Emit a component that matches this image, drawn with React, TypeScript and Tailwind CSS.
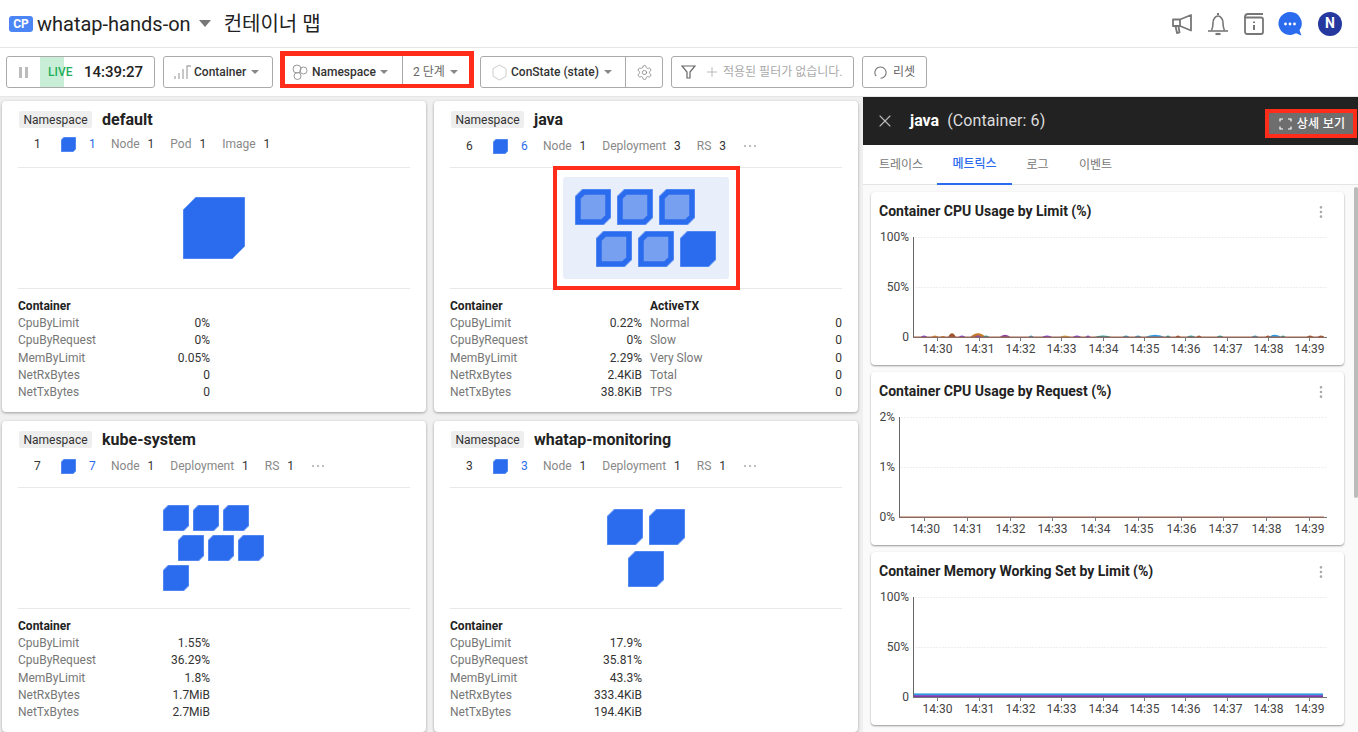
import React from "react";
import { EllipsisVertical, Plus, Settings, X } from "lucide-react";

const FONT = "font-['Roboto','Noto_Sans_CJK_KR',sans-serif]";

function Caret() {
  return <span className="inline-block w-0 h-0 border-x-[4px] border-x-transparent border-t-[4px] border-t-[#888]" />;
}

function Cube({ size, inner = false }: { size: number; inner?: boolean }) {
  return (
    <svg width={size} height={size} viewBox="0 0 100 100" className="block shrink-0">
      <polygon points="21,0 100,0 100,79 79,100 0,100 0,21" fill="#2b6cee" stroke="#78a2f4" strokeWidth={100 / size} />
      {inner && <polygon points="27,16 84,16 84,73 73,84 16,84 16,27" fill="#78a0f0" />}
    </svg>
  );
}

type Stat = { label: string; value: string };
type Row = [string, string];
type CardProps = {
  name: string;
  count: string;
  stats: Stat[];
  more?: boolean;
  map: React.ReactNode;
  rows: Row[];
  activeTx?: Row[];
};

function MetricColumn({ title, rows, width }: { title: string; rows: Row[]; width: string }) {
  return (
    <div className={width}>
      <div className="text-[12px] leading-[17px] font-bold text-[#222]">{title}</div>
      {rows.map(([k, v]) => (
        <div key={k} className="flex justify-between text-[12px] leading-[17.3px]">
          <span className="text-[#777]">{k}</span>
          <span className="text-[#333]">{v}</span>
        </div>
      ))}
    </div>
  );
}

function NsCard({ name, count, stats, more, map, rows, activeTx }: CardProps) {
  return (
    <div className="h-[311px] shrink-0 bg-white rounded-[4px] shadow-[0_1px_3px_rgba(0,0,0,0.35)] px-4 pt-[10px]">
      <div className="flex items-center h-[17px]">
        <span className="ml-[1px] h-[17px] w-[73px] flex items-center justify-center rounded-[2px] bg-[#eeeeee] text-[12px] text-[#333]">Namespace</span>
        <span className="ml-[10px] text-[16px] font-bold text-[#222] leading-[17px]">{name}</span>
      </div>
      <div className={`flex items-center h-[39px] text-[12px] pl-4 ${more ? "pb-[3px]" : "pb-[7px]"}`}>
        <span className="w-[27px] text-[#333]">{count}</span>
        <Cube size={15} />
        <span className="ml-[13px] w-[22px] text-[#2b6cee]">{count}</span>
        {stats.map((s) => (
          <span key={s.label} className="flex items-center mr-[16px]">
            <span className="text-[#888] mr-[8px]">{s.label}</span>
            <span className="text-[#333]">{s.value}</span>
          </span>
        ))}
        {more && (
          <span className="flex gap-[3px] ml-[2px]">
            <span className="w-[2px] h-[2px] rounded-full bg-[#aaa]" />
            <span className="w-[2px] h-[2px] rounded-full bg-[#aaa]" />
            <span className="w-[2px] h-[2px] rounded-full bg-[#aaa]" />
          </span>
        )}
      </div>
      <div className="h-[122px] border-y border-[#e8e8e8] flex items-center justify-center">{map}</div>
      <div className="flex gap-2 pt-[9px]">
        <MetricColumn title="Container" rows={rows} width="w-[192px]" />
        {activeTx && <MetricColumn title="ActiveTX" rows={activeTx} width="w-[192px]" />}
      </div>
    </div>
  );
}

function Honey({ rows, size, gap, offset, inner = [] as number[] }: { rows: number[]; size: number; gap: number; offset: number; inner?: number[] }) {
  let n = 0;
  return (
    <div className="flex flex-col mr-[1px]" style={{ gap }}>
      {rows.map((c, i) => (
        <div key={i} className="flex" style={{ gap, marginLeft: i % 2 ? offset : 0 }}>
          {Array.from({ length: c }).map(() => {
            const idx = n++;
            return <Cube key={idx} size={size} inner={inner.includes(idx)} />;
          })}
        </div>
      ))}
    </div>
  );
}

const ticksA = [937, 979, 1020, 1061, 1103, 1144, 1185, 1227, 1268, 1309];
const ticksB = [924.5, 967, 1010, 1052, 1095, 1138, 1181, 1223, 1266, 1309];
const tickLabels = ["14:30", "14:31", "14:32", "14:33", "14:34", "14:35", "14:36", "14:37", "14:38", "14:39"];

const blobs: [number, number, string, number][] = [
  [924, 4, "#7c3aed", 1.5], [935, 4, "#d98b1f", 1.5], [943, 3, "#d98b1f", 1], [952, 4, "#a0522d", 3], [962, 4, "#7c3aed", 1.5],
  [978, 8, "#c77a2a", 3], [978, 4, "#7c3aed", 1.5], [986, 4, "#16a0a8", 1.5], [1005, 6, "#8b3fa0", 2], [1031, 3, "#1f9bd1", 1.5],
  [1047, 6, "#7c3aed", 1.5], [1065, 6, "#d9a441", 1.5], [1077, 5, "#7c3aed", 1.5], [1088, 3, "#7c3aed", 1.5], [1103, 10, "#16a0a8", 1.5],
  [1126, 4, "#1f9bd1", 1.5], [1138, 4, "#1f9bd1", 1.5], [1155, 11, "#2b9be8", 2], [1168, 3, "#16a0a8", 1.5], [1178, 3, "#a0522d", 1.5],
  [1191, 5, "#16a0a8", 1.5], [1199, 3, "#a0522d", 1.5], [1220, 4, "#16a0a8", 1.5], [1255, 4, "#1f9bd1", 1.5], [1268, 3, "#a0522d", 1.5],
  [1275, 7, "#2b9be8", 2], [1283, 3, "#16a0a8", 1.5], [1310, 4, "#a0522d", 1.5], [1321, 4, "#a0522d", 1.5],
];

function ChartCard({ title, y, axis, ticks, band, spikes }: { title: string; y: string[]; axis: number; ticks: number[]; band?: boolean; spikes?: boolean }) {
  const gx = axis + 2;
  return (
    <div className="h-[173px] shrink-0 bg-white rounded-[4px] shadow-[0_1px_2px_rgba(0,0,0,0.4)]">
      <div className="h-[45px] pl-2 pr-4 flex items-start pt-[11px] justify-between">
        <span className="text-[14px] leading-[17px] font-bold text-[#222]">{title}</span>
        <EllipsisVertical size={16} className="text-[#aaa] mt-[1px] -mr-[1px]" />
      </div>
      <svg width="473" height="128" viewBox="871 237 473 128" className="block overflow-visible">
        <g fontFamily="Roboto, sans-serif" fontSize="12" fill="#444">
          <text x={axis - 4} y="241" textAnchor="end">{y[0]}</text>
          <text x={axis - 4} y="291" textAnchor="end">{y[1]}</text>
          <text x={axis - 4} y="341" textAnchor="end">{y[2]}</text>
          {tickLabels.map((t, i) => (
            <text key={t} x={ticks[i] + 0.5} y="352.5" textAnchor="middle">{t}</text>
          ))}
        </g>
        <line x1={gx} x2="1327" y1="237.5" y2="237.5" stroke="#eee" strokeDasharray="2 1" />
        <line x1={gx} x2="1327" y1="287.5" y2="287.5" stroke="#eee" strokeDasharray="2 1" />
        {spikes &&
          blobs.map(([x, w, c, h], i) => (
            <path key={i} d={`M${x - w} 337.5 Q${x} ${337.5 - h * 2.8} ${x + w} 337.5 Z`} fill={c} />
          ))}
        {band && (
          <>
            <rect x={axis} y="333.4" width={1323 - axis} height="2" fill="#2f9be0" />
            <rect x={axis} y="335.2" width={1323 - axis} height="2.3" fill="#7d36b0" />
          </>
        )}
        <line x1={axis + 0.5} x2={axis + 0.5} y1="237" y2="338" stroke="#666" />
        <line x1={axis} x2="1327" y1="337.5" y2="337.5" stroke="#777" />
        {!band && <line x1={axis} x2="1324" y1="337" y2="337" stroke="#a0604a" />}
        {ticks.map((t) => (
          <line key={t} x1={Math.floor(t) + 0.5} x2={Math.floor(t) + 0.5} y1="337" y2="341" stroke="#777" />
        ))}
      </svg>
    </div>
  );
}

const Btn = ({ children, className = "" }: { children: React.ReactNode; className?: string }) => (
  <div className={`h-[32px] rounded-[3px] border border-[#aaa] bg-white flex items-center shrink-0 ${className}`}>{children}</div>
);

const tabs = [
  { t: "트레이스", w: "w-[72px]", cls: "text-[#777]" },
  { t: "메트릭스", w: "w-[75px]", cls: "text-[#2b6cee] font-medium border-b-2 border-[#2b6cee]" },
  { t: "로그", w: "w-[51px]", cls: "text-[#777]" },
  { t: "이벤트", w: "w-[65px]", cls: "text-[#777]" },
];

export default function App() {
  return (
    <div className={`${FONT} w-[1358px] h-[732px] overflow-hidden bg-[#f0f0f0] flex flex-col`}>
      <header className="h-[48px] bg-white border-b border-[#e6e6e6] flex items-center shrink-0 pl-[9px] pr-[16px]">
        <span className="w-[24px] h-[16px] rounded-[3px] bg-[#4c86f6] text-white text-[12px] font-bold flex items-center justify-center">CP</span>
        <span className="ml-1 text-[20px] text-[#222]">whatap-hands-on</span>
        <span className="ml-2 inline-block w-0 h-0 border-x-[6px] border-x-transparent border-t-[7px] border-t-[#777]" />
        <span className="ml-[13px] text-[20px] text-[#222]">컨테이너 맵</span>
        <div className="ml-auto flex items-center">
          <svg width="20" height="20" viewBox="0 0 20 20" fill="none" stroke="#777" strokeWidth="1.8" strokeLinejoin="round">
            <path d="M1 5.5h7L19 1v15.5L8 12H1z" />
            <path d="M8 5.5V12" />
            <path d="M3.5 12l1.5 7 2.5-.6L6.5 12.5" />
          </svg>
          <svg width="22" height="24" viewBox="0 0 22 24" fill="none" stroke="#777" strokeWidth="1.6" className="ml-[15px]">
            <path d="M11 1v2" strokeWidth="2" />
            <path d="M4.5 18.5c1-2 1.5-3.5 1.5-7.5 0-4 2.4-7 5-7s5 3 5 7c0 4 .5 5.5 1.5 7.5" />
            <path d="M1 19h20" />
            <path d="M8.5 22h5" strokeWidth="2.2" />
          </svg>
          <svg width="20" height="22" viewBox="0 0 20 22" fill="none" stroke="#777" strokeWidth="1.8" className="ml-[15px]">
            <path d="M1 5V4a3 3 0 0 1 3-3h15" />
            <path d="M1 4.5h16a2 2 0 0 1 2 2V19a2 2 0 0 1-2 2H3a2 2 0 0 1-2-2z" />
            <path d="M10 12v5" strokeWidth="2" />
            <path d="M10 8.5v1.6" strokeWidth="2" />
          </svg>
          <svg width="24" height="24" viewBox="0 0 24 24" className="ml-[14px]">
            <path d="M12 0a11.5 11.5 0 1 0 6 21.3l5.5 2.2-2-5.2A11.5 11.5 0 0 0 12 0z" fill="#2b6cee" />
            <circle cx="7.5" cy="12" r="1.4" fill="#fff" />
            <circle cx="12" cy="12" r="1.4" fill="#fff" />
            <circle cx="16.5" cy="12" r="1.4" fill="#fff" />
          </svg>
          <span className="ml-[16px] w-6 h-6 rounded-full bg-[#26399e] text-white text-[14px] font-bold flex items-center justify-center">N</span>
        </div>
      </header>

      <div className="h-[49px] bg-white border-b border-[#e6e6e6] shrink-0 flex items-center pl-[6px] text-[12px]">
        <Btn className="w-[149px]">
          <span className="flex gap-[3px] ml-[12px]">
            <span className="w-[3px] h-[11px] bg-[#bbb]" />
            <span className="w-[3px] h-[11px] bg-[#bbb]" />
          </span>
          <span className="ml-[12px] w-[24px] h-full bg-[#c9eed8] pl-2 flex items-center text-[#1fae5b] font-medium whitespace-nowrap">LIVE</span>
          <span className="ml-[20px] text-[15px] font-medium text-[#222]">14:39:27</span>
        </Btn>
        <Btn className="w-[110px] ml-2 pl-[10px]">
          <svg width="17" height="14" viewBox="0 0 17 14" stroke="#aaa" strokeWidth="1.3" fill="none">
            <path d="M1 14v-3M5 14V8M9 14V4M13 14V1h4" />
          </svg>
          <span className="ml-[3px] font-medium text-[#333]">Container</span>
          <span className="ml-[5px] flex"><Caret /></span>
        </Btn>
        <div className="ml-[7px] w-[194px] h-[37px] border-x-[5px] border-t-[5px] border-b-[4px] border-[#ff2d1a] flex items-center shrink-0 -mt-[5px]">
          <div className="w-[118px] h-full border-r border-[#aaa] flex items-center pl-[7px] pt-1">
            <svg width="16" height="16" viewBox="0 0 16 16" fill="none" stroke="#999" strokeWidth="1">
              <circle cx="5" cy="5" r="4" />
              <circle cx="11.5" cy="6.5" r="3.5" />
              <circle cx="5.5" cy="12" r="3.5" />
            </svg>
            <span className="ml-[4px] font-medium text-[#333]">Namespace</span>
            <span className="ml-[4px] flex"><Caret /></span>
          </div>
          <div className="pl-[10px] pt-1 flex items-center text-[#666]">
            2 단계
            <span className="ml-[5px] flex"><Caret /></span>
          </div>
        </div>
        <Btn className="ml-[6px] w-[183px]">
          <div className="w-[145px] h-full border-r border-[#aaa] flex items-center pl-[11px]">
            <svg width="15" height="17" viewBox="0 0 15 17" fill="none" stroke="#ccc">
              <path d="M7.5 1L14 4.7v7.6L7.5 16 1 12.3V4.7z" />
            </svg>
            <span className="ml-[4px] font-medium text-[#333]">ConState (state)</span>
            <span className="ml-[5px] flex"><Caret /></span>
          </div>
          <Settings size={17} strokeWidth={1.2} className="ml-[10px] text-[#888]" />
        </Btn>
        <Btn className="ml-2 w-[183px] pl-[9px]">
          <svg width="15" height="14" viewBox="0 0 15 14" fill="none" stroke="#666" strokeWidth="1.2">
            <path d="M1 1h13L9 7v6H6V7z" />
          </svg>
          <Plus size={16} strokeWidth={1.2} className="ml-[8px] text-[#aaa]" />
          <span className="ml-[3px] text-[#aaa] whitespace-nowrap">적용된 필터가 없습니다.</span>
        </Btn>
        <Btn className="ml-2 w-[65px] pl-[11px]">
          <svg width="13" height="13" viewBox="0 0 13 13" fill="none" stroke="#777" strokeWidth="1.1">
            <path d="M2.2 10.2A5.6 5.6 0 1 1 6.5 12.2" />
          </svg>
          <span className="ml-[6px] text-[#666]">리셋</span>
        </Btn>
      </div>

      <div className="flex flex-1 min-h-0">
        <div className="w-[863px] shrink-0 grid grid-cols-[424px_424px] gap-x-2 gap-y-[9px] content-start pl-[2px] pt-[4px] overflow-hidden text-[12px]">
          <NsCard
            name="default"
            count="1"
            stats={[{ label: "Node", value: "1" }, { label: "Pod", value: "1" }, { label: "Image", value: "1" }]}
            map={<Cube size={62} />}
            rows={[["CpuByLimit", "0%"], ["CpuByRequest", "0%"], ["MemByLimit", "0.05%"], ["NetRxBytes", "0"], ["NetTxBytes", "0"]]}
          />
          <NsCard
            name="java"
            count="6"
            more
            stats={[{ label: "Node", value: "1" }, { label: "Deployment", value: "3" }, { label: "RS", value: "3" }]}
            map={
              <div className="border-4 border-[#ff2d1a] w-[187px] h-[124px] shrink-0 flex items-center justify-center bg-white">
                <div className="w-[166px] h-[102px] rounded-[3px] bg-[#e8effb] flex items-center justify-center">
                  <Honey rows={[3, 3]} size={36} gap={6} offset={21} inner={[0, 1, 2, 3, 4]} />
                </div>
              </div>
            }
            rows={[["CpuByLimit", "0.22%"], ["CpuByRequest", "0%"], ["MemByLimit", "2.29%"], ["NetRxBytes", "2.4KiB"], ["NetTxBytes", "38.8KiB"]]}
            activeTx={[["Normal", "0"], ["Slow", "0"], ["Very Slow", "0"], ["Total", "0"], ["TPS", "0"]]}
          />
          <NsCard
            name="kube-system"
            count="7"
            more
            stats={[{ label: "Node", value: "1" }, { label: "Deployment", value: "1" }, { label: "RS", value: "1" }]}
            map={<Honey rows={[3, 3, 1]} size={26} gap={4} offset={15} />}
            rows={[["CpuByLimit", "1.55%"], ["CpuByRequest", "36.29%"], ["MemByLimit", "1.8%"], ["NetRxBytes", "1.7MiB"], ["NetTxBytes", "2.7MiB"]]}
          />
          <NsCard
            name="whatap-monitoring"
            count="3"
            more
            stats={[{ label: "Node", value: "1" }, { label: "Deployment", value: "1" }, { label: "RS", value: "1" }]}
            map={<Honey rows={[2, 1]} size={36} gap={6} offset={21} />}
            rows={[["CpuByLimit", "17.9%"], ["CpuByRequest", "35.81%"], ["MemByLimit", "43.3%"], ["NetRxBytes", "333.4KiB"], ["NetTxBytes", "194.4KiB"]]}
          />
        </div>

        <aside className="flex-1 min-w-0 flex flex-col bg-white">
          <div className="h-[48px] bg-[#222222] flex items-center shrink-0 pl-[12px]">
            <X size={20} strokeWidth={1.3} className="text-[#bbb]" />
            <span className="ml-[15px] text-[16px] font-bold text-white">java</span>
            <span className="ml-[8px] text-[16px] text-[#ddd] tracking-[0.1px]">(Container: 6)</span>
            <div className="ml-auto mr-[1px] w-[92px] h-[29px] border-4 border-[#ff2d1a] mt-[5px]">
              <div className="h-full bg-[#6e6e6e] flex items-center justify-center text-white text-[12px] font-medium pl-[2px] tracking-[0.3px]">
                <svg width="13" height="12" viewBox="0 0 13 12" fill="none" stroke="#fff" strokeWidth="1.2" className="mr-[5px]">
                  <path d="M1 3.5V1h3M9 1h3v2.5M12 8.5V11H9M4 11H1V8.5" />
                </svg>
                상세 보기
              </div>
            </div>
          </div>
          <div className="h-[40px] border-b border-[#e4e4e4] flex shrink-0 pl-[2px] text-[12px]">
            {tabs.map((x) => (
              <div key={x.t} className={`h-[40px] flex items-center justify-center ${x.w} ${x.cls}`}>{x.t}</div>
            ))}
          </div>
          <div className="flex-1 min-h-0 flex bg-[#fafafa]">
            <div className="w-[491px] shrink-0 flex flex-col gap-[7px] pl-2 pr-[10px] pt-[7px] overflow-hidden">
              <ChartCard title="Container CPU Usage by Limit (%)" y={["100%", "50%", "0"]} axis={913} ticks={ticksA} spikes />
              <ChartCard title="Container CPU Usage by Request (%)" y={["2%", "1%", "0%"]} axis={899} ticks={ticksB} />
              <ChartCard title="Container Memory Working Set by Limit (%)" y={["100%", "50%", "0"]} axis={913} ticks={ticksA} band />
            </div>
            <div className="w-[4px] h-[311px] mt-[2px] rounded-[2px] bg-[#bbbbbb]" />
          </div>
        </aside>
      </div>
    </div>
  );
}
